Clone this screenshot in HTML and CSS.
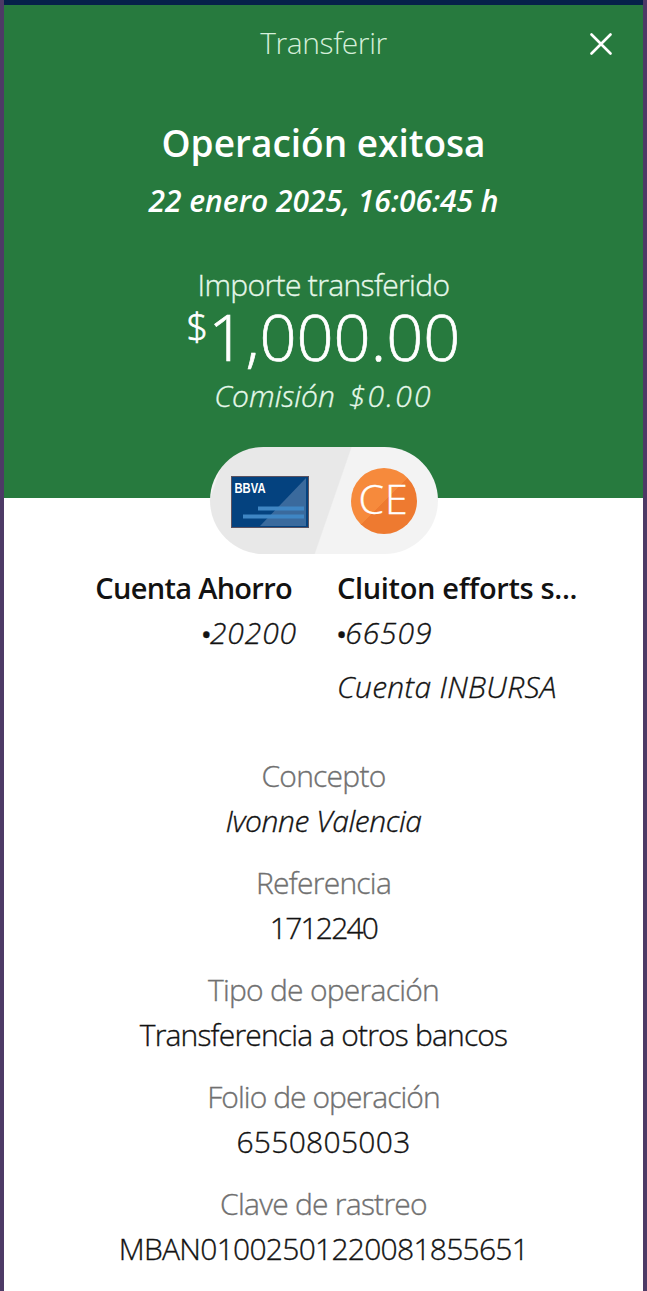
FILE: index.html
```
<!DOCTYPE html>
<html lang="es">
<head>
    <meta charset="utf-8">
    <title>Transferir</title>
    <link rel="stylesheet" href="styles.css">
</head>
<body>
    <div class="screen">
        <header class="hero">
            <div class="topbar">
                <span class="topbar-title">Transferir</span>
                <svg class="close" viewBox="0 0 22 22" width="22" height="22">
                    <path d="M1.5 1.5 L20.5 20.5 M20.5 1.5 L1.5 20.5" />
                </svg>
            </div>
            <h1 class="title">Operación exitosa</h1>
            <div class="date">22 enero 2025, 16:06:45 h</div>
            <div class="amount-label">Importe transferido</div>
            <div class="amount"><span class="currency">$</span><span class="figure">1,000.00</span></div>
            <div class="fee"><span>Comisión</span><span class="fee-value">$0.00</span></div>
        </header>

        <!-- origin card / destination avatar -->
        <div class="pill">
            <svg class="card" viewBox="0 0 78 52" width="78" height="52">
                <rect x="0.5" y="0.5" width="77" height="51" fill="#04427f" stroke="#5c5360" />
                <path d="M75 2 V50 H29 Z" fill="#3a6a9d" />
                <rect x="27" y="30.5" width="46" height="4" fill="#3f86c4" />
                <rect x="12" y="38.5" width="61" height="4" fill="#3f86c4" />
                <text x="3.5" y="17" class="card-brand" textLength="31" lengthAdjust="spacingAndGlyphs">BBVA</text>
            </svg>
            <div class="avatar">CE</div>
        </div>

        <div class="accounts">
            <div class="account from">
                <div class="name">Cuenta Ahorro</div>
                <div class="number"><span class="dot">•</span>20200</div>
            </div>
            <div class="account to">
                <div class="name name-to">Cluiton efforts s...</div>
                <div class="number"><span class="dot">•</span>66509</div>
                <div class="bank">Cuenta INBURSA</div>
            </div>
        </div>

        <dl class="details">
            <div class="item">
                <dt class="label concepto">Concepto</dt>
                <dd class="value person">Ivonne Valencia</dd>
            </div>
            <div class="item">
                <dt class="label referencia">Referencia</dt>
                <dd class="value digits">1712240</dd>
            </div>
            <div class="item">
                <dt class="label tipo">Tipo de operación</dt>
                <dd class="value">Transferencia a otros bancos</dd>
            </div>
            <div class="item">
                <dt class="label folio">Folio de operación</dt>
                <dd class="value digits-wide">6550805003</dd>
            </div>
            <div class="item">
                <dt class="label clave">Clave de rastreo</dt>
                <dd class="value tracking">MBAN01002501220081855651</dd>
            </div>
        </dl>
    </div>
</body>
</html>
```

FILE: styles.css
```
* {
    box-sizing: border-box;
}

body {
    margin: 0;
    background-color: #4d3a66;
    font-family: "Open Sans", "Liberation Sans", sans-serif;
    font-weight: 300;
    font-size: 30px;
    line-height: 44px;
    color: #121212;
    -webkit-text-stroke: 0.35px currentColor;
}

.screen {
    margin: 0 4px;
    height: 1291px;
    overflow: hidden;
    background-color: #fff;
    border-top: 5px solid #06214a;
    white-space: nowrap;
}

/* green header */
.hero {
    height: 493px;
    background-color: #277a3e;
    color: #fff;
    text-align: center;
    display: flex;
    flex-direction: column;
    align-items: center;
}

.topbar {
    width: 100%;
    height: 78px;
    display: grid;
    grid-template-columns: 1fr auto 1fr;
    align-items: center;
}

.topbar-title {
    grid-column: 2;
    margin-top: -2px;
    letter-spacing: -0.4px;
    color: #d5efda;
    -webkit-text-stroke-width: 0;
}

.close {
    justify-self: end;
    margin-right: 31px;
    fill: none;
    stroke: #fff;
    stroke-width: 2.6;
    stroke-linecap: round;
}

.title {
    margin: 35px 0 0;
    font-size: 37px;
    font-weight: 600;
    line-height: 50px;
    -webkit-text-stroke-width: 0;
}

.date {
    margin-top: 11px;
    font-size: 30px;
    font-weight: 600;
    font-style: italic;
    -webkit-text-stroke-width: 0;
}

.amount-label {
    margin-top: 44px;
    line-height: 36px;
    letter-spacing: -0.65px;
    color: #e6f8ea;
}

.amount {
    display: flex;
    height: 64px;
    align-items: flex-start;
    margin-top: 1px;
    -webkit-text-stroke-width: 0.7px;
}

.currency {
    font-size: 38px;
    line-height: 44px;
}

.figure {
    font-size: 65px;
    line-height: 64px;
}

.fee {
    display: flex;
    gap: 14px;
    margin-top: 10px;
    line-height: 36px;
    font-style: italic;
    color: #e6f8ea;
}

.fee-value {
    letter-spacing: 2.2px;
}

/* overlaps the lower edge of the header */
.pill {
    position: relative;
    width: 228px;
    height: 107px;
    margin: -51px auto 0;
    padding: 0 21px;
    display: flex;
    align-items: center;
    justify-content: space-between;
    border-radius: 54px;
    background: linear-gradient(109deg, #f3f3f3 6.5%, #e8e8e8 7%, #e8e8e8 53.2%, #f3f3f3 53.7%);
}

.card {
    margin-top: 3px;
}

.card-brand {
    font-family: "Liberation Sans", sans-serif;
    font-size: 14px;
    font-weight: 700;
    fill: #fff;
    stroke: none;
}

.avatar {
    width: 66px;
    height: 66px;
    border-radius: 50%;
    background: linear-gradient(135deg, #f68a3c 50%, #ee7a30 50.5%);
    color: #fff;
    font-size: 41px;
    line-height: 61px;
    letter-spacing: 1px;
    text-align: center;
}

.accounts {
    display: grid;
    grid-template-columns: 293px 1fr;
    column-gap: 40px;
    margin-top: 12px;
}

.from {
    text-align: right;
}

.name {
    font-weight: 600;
    font-size: 29px;
    letter-spacing: -0.7px;
    -webkit-text-stroke-width: 0;
}

.name-to {
    letter-spacing: -0.35px;
}

.from .name {
    margin-right: 5px;
}

.number {
    margin-top: 1px;
    font-style: italic;
    letter-spacing: 0.9px;
}

.dot {
    font-size: 22px;
    font-weight: 700;
    letter-spacing: 0;
    vertical-align: 1px;
}

.bank {
    margin-top: 9px;
    font-style: italic;
    letter-spacing: 0.3px;
}

/* operation data */
.details {
    margin: 44px 0 0;
    text-align: center;
    display: grid;
    row-gap: 17px;
}

.item {
    line-height: 45px;
}

.label {
    color: #707070;
    letter-spacing: -0.75px;
}

.folio {
    letter-spacing: -0.95px;
}

.value {
    margin: 0;
    letter-spacing: -0.83px;
}

.person {
    font-style: italic;
    letter-spacing: -0.4px;
}

.digits {
    letter-spacing: -1.8px;
}

.digits-wide {
    letter-spacing: 0.3px;
}

.tracking {
    letter-spacing: -0.73px;
}
```
